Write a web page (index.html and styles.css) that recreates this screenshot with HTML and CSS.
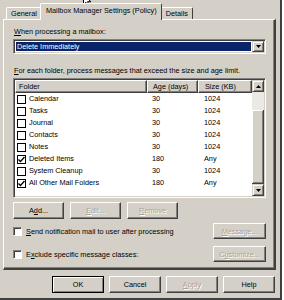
FILE: index.html
```html
<!DOCTYPE html>
<html lang="en">
<head>
  <meta charset="UTF-8" />
  <title>Mailbox Manager Settings</title>
  <link rel="stylesheet" href="styles.css">
</head>
<body>
  <div class="dialog">
    <div class="tabs">
      <div class="tab">General</div>
      <div class="tab active">Mailbox Manager Settings (Policy)</div>
      <div class="tab">Details</div>
    </div>

    <div class="panel">
      <div class="label"><u>W</u>hen processing a mailbox:</div>
      <div class="combo">
        <div class="combo-value">Delete Immediately</div>
        <div class="scroll-btn">
          <svg width="5" height="3" viewBox="0 0 5 3"><path d="M0 0h5L2.5 3z" fill="#000"/></svg>
        </div>
      </div>

      <div class="label caption"><u>F</u>or each folder, process messages that exceed the size and age limit.</div>

      <div class="list">
        <div class="list-body">
          <div class="list-head">
            <div class="hcell col-folder">Folder</div>
            <div class="hcell col-age">Age (days)</div>
            <div class="hcell col-size">Size (KB)</div>
          </div>
          <div class="row"><div class="col-folder"><span class="check"></span>Calendar</div><div class="col-age">30</div><div class="col-size">1024</div></div>
          <div class="row"><div class="col-folder"><span class="check"></span>Tasks</div><div class="col-age">30</div><div class="col-size">1024</div></div>
          <div class="row"><div class="col-folder"><span class="check"></span>Journal</div><div class="col-age">30</div><div class="col-size">1024</div></div>
          <div class="row"><div class="col-folder"><span class="check"></span>Contacts</div><div class="col-age">30</div><div class="col-size">1024</div></div>
          <div class="row"><div class="col-folder"><span class="check"></span>Notes</div><div class="col-age">30</div><div class="col-size">1024</div></div>
          <div class="row"><div class="col-folder"><span class="check on"><svg width="7" height="7" viewBox="0 0 7 7"><path d="M0.5 3.5l2 2 4-4.5" fill="none" stroke="#000" stroke-width="1.4"/></svg></span>Deleted Items</div><div class="col-age">180</div><div class="col-size">Any</div></div>
          <div class="row"><div class="col-folder"><span class="check"></span>System Cleanup</div><div class="col-age">30</div><div class="col-size">1024</div></div>
          <div class="row"><div class="col-folder"><span class="check on"><svg width="7" height="7" viewBox="0 0 7 7"><path d="M0.5 3.5l2 2 4-4.5" fill="none" stroke="#000" stroke-width="1.4"/></svg></span>All Other Mail Folders</div><div class="col-age">180</div><div class="col-size">Any</div></div>
        </div>
        <div class="scrollbar">
          <div class="scroll-btn">
            <svg width="5" height="3" viewBox="0 0 5 3"><path d="M0 3h5L2.5 0z" fill="#000"/></svg>
          </div>
          <div class="track"></div>
          <div class="thumb"></div>
          <div class="scroll-btn">
            <svg width="5" height="3" viewBox="0 0 5 3"><path d="M0 0h5L2.5 3z" fill="#000"/></svg>
          </div>
        </div>
      </div>

      <div class="btn-row">
        <button class="btn">A<u>d</u>d...</button>
        <button class="btn disabled"><u>E</u>dit...</button>
        <button class="btn disabled"><u>R</u>emove</button>
      </div>

      <div class="opt-row">
        <span class="box"></span>
        <span class="opt-text"><u>S</u>end notification mail to user after processing</span>
        <button class="btn side disabled"><u>M</u>essage...</button>
      </div>
      <div class="opt-row">
        <span class="box"></span>
        <span class="opt-text">E<u>x</u>clude specific message classes:</span>
        <button class="btn side disabled">C<u>u</u>stomize...</button>
      </div>
    </div>

    <div class="footer">
      <button class="btn wide default">OK</button>
      <button class="btn wide">Cancel</button>
      <button class="btn wide disabled"><u>A</u>pply</button>
      <button class="btn wide">Help</button>
    </div>

    <svg class="cursor" width="9" height="13" viewBox="0 0 9 13">
      <path d="M0.5 0.5v10l2.5-2.2 1.8 4 1.6-0.7-1.8-3.9h3.3z" fill="#fff" stroke="#000" stroke-width="1"/>
    </svg>
  </div>
</body>
</html>
```

FILE: styles.css
```css
body {
  margin: 0;
  background-color: #ffffff;
  font-family: "Liberation Sans", Arial, sans-serif;
  font-size: 7.3px;
  color: #000;
}
.dialog {
  position: relative;
  width: 280px;
  height: 298px;
  background-color: #d4d0c8;
  border-right: 2px solid #404040;
  border-bottom: 2px solid #404040;
  overflow: hidden;
}
u {
  text-decoration: underline;
  text-underline-offset: 1px;
}

/* tabs */
.tabs {
  display: flex;
  align-items: flex-end;
  height: 19px;
  padding-left: 6px;
}
.tab {
  height: 12px;
  line-height: 12px;
  padding: 0 4px;
  border-top: 1px solid #fff;
  border-left: 1px solid #fff;
  border-right: 1px solid #404040;
  box-sizing: border-box;
  border-radius: 2px 2px 0 0;
}
.tab.active {
  position: relative;
  z-index: 1;
  height: 17px;
  line-height: 13px;
  margin: 0 -1px -1px -2px;
  padding: 0 4px 0 5px;
  background-color: #d4d0c8;
}

/* panel */
.panel {
  margin-left: 3px;
  width: 273px;
  height: 251px;
  box-sizing: border-box;
  padding: 7px 8px 0 9px;
  border-top: 1px solid #fff;
  border-left: 1px solid #fff;
  border-right: 2px solid #404040;
  border-bottom: 2px solid #404040;
  box-shadow: inset -1px -1px #808080;
}
.label {
  line-height: 10px;
  padding-left: 1px;
}
.caption {
  margin-top: 12px;
}
.combo {
  display: flex;
  margin-top: 2px;
  height: 15px;
  box-sizing: border-box;
  padding: 1px;
  background-color: #fff;
  border-top: 1px solid #808080;
  border-left: 1px solid #808080;
  border-right: 1px solid #fff;
  border-bottom: 1px solid #fff;
  box-shadow: inset 1px 1px #404040, inset -1px -1px #d4d0c8;
}
.combo-value {
  flex: 1;
  margin: 1px;
  padding-left: 1px;
  background-color: #0a246a;
  color: #fff;
  line-height: 9px;
}
.scroll-btn {
  width: 12px;
  height: 11px;
  box-sizing: border-box;
  display: flex;
  align-items: center;
  justify-content: center;
  background-color: #d4d0c8;
  border-top: 1px solid #d4d0c8;
  border-left: 1px solid #d4d0c8;
  border-right: 1px solid #404040;
  border-bottom: 1px solid #404040;
  box-shadow: inset 1px 1px #fff, inset -1px -1px #808080;
}

/* list view */
.list {
  display: flex;
  margin-top: 2px;
  height: 120px;
  box-sizing: border-box;
  background-color: #fff;
  border-top: 1px solid #808080;
  border-left: 1px solid #808080;
  border-right: 1px solid #fff;
  border-bottom: 1px solid #fff;
  box-shadow: inset 1px 1px #404040, inset -1px -1px #d4d0c8;
  padding: 1px;
}
.list-body {
  flex: 1;
}
.list-head {
  display: flex;
  height: 13px;
}
.hcell {
  box-sizing: border-box;
  line-height: 11px;
  background-color: #d4d0c8;
  border-top: 1px solid #fff;
  border-left: 1px solid #fff;
  border-right: 1px solid #404040;
  border-bottom: 1px solid #404040;
  box-shadow: inset -1px -1px #808080;
}
.col-folder {
  width: 132px;
  padding-left: 2px;
  box-sizing: border-box;
  display: flex;
  align-items: center;
}
.hcell.col-folder {
  padding-left: 3px;
}
.col-age {
  width: 51px;
  padding-left: 5px;
  box-sizing: border-box;
}
.col-size {
  width: 54px;
  padding-left: 6px;
  box-sizing: border-box;
}
.row {
  display: flex;
  height: 12px;
  line-height: 12px;
}
.check {
  width: 9px;
  height: 9px;
  box-sizing: border-box;
  border: 1px solid #000;
  background-color: #fff;
  margin-right: 3px;
  display: flex;
  align-items: center;
  justify-content: center;
}
.scrollbar {
  width: 12px;
  display: flex;
  flex-direction: column;
}
.scrollbar .scroll-btn {
  height: 12px;
}
.track {
  height: 18px;
  background-color: #ebe9e4;
}
.thumb {
  flex: 1;
  background-color: #d4d0c8;
  border-right: 1px solid #404040;
  border-bottom: 1px solid #404040;
  box-shadow: inset 1px 1px #fff, inset -1px -1px #808080;
}

/* buttons */
.btn {
  font: inherit;
  color: #000;
  height: 17px;
  padding: 0;
  background-color: #d4d0c8;
  border-top: 1px solid #fff;
  border-left: 1px solid #fff;
  border-right: 1px solid #404040;
  border-bottom: 1px solid #404040;
  box-shadow: inset -1px -1px #808080;
}
.btn.disabled {
  color: #a8a49c;
  text-shadow: 1px 1px #fff;
}
.btn-row {
  display: flex;
  gap: 6px;
  margin-top: 4px;
}
.btn-row .btn {
  width: 51px;
}
.opt-row {
  display: flex;
  align-items: center;
  margin-top: 4px;
  height: 16px;
}
.opt-row + .opt-row {
  margin-top: 7px;
}
.box {
  width: 9px;
  height: 9px;
  box-sizing: border-box;
  background-color: #fff;
  border-top: 1px solid #808080;
  border-left: 1px solid #808080;
  border-right: 1px solid #fff;
  border-bottom: 1px solid #fff;
  box-shadow: inset 1px 1px #404040;
}
.opt-text {
  flex: 1;
  margin-left: 4px;
}
.btn.side {
  width: 53px;
  height: 16px;
}

/* footer */
.footer {
  display: flex;
  justify-content: flex-end;
  gap: 5px;
  padding-right: 5px;
  margin-top: 6px;
}
.btn.wide {
  width: 52px;
}
.btn.default {
  border: 1px solid #000;
  box-shadow: inset 1px 1px #fff, inset -1px -1px #808080;
}

.cursor {
  position: absolute;
  left: 83px;
  top: -6px;
}
```
